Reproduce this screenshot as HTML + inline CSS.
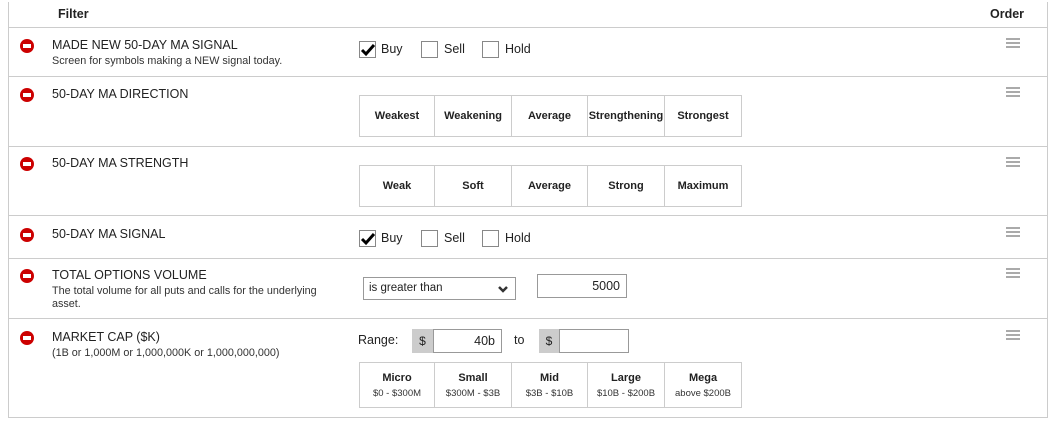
<!DOCTYPE html>
<html><head><style>
body{margin:0;background:#fff;font-family:"Liberation Sans",sans-serif;color:#222;width:1063px;height:428px;position:relative;overflow:hidden}
.box{position:absolute;left:8px;top:2px;width:1040px;height:416px;border:1px solid #ccc;border-top:none;box-sizing:border-box}
.hl{position:absolute;left:8px;width:1040px;height:1px;background:#ccc}
.t{position:absolute;font-size:12.5px;white-space:nowrap}
.s{position:absolute;font-size:10.8px;color:#333;white-space:nowrap}
.b{font-weight:bold}
.minus{position:absolute;left:20px;width:14px;height:14px;border-radius:50%;background:#c00}
.minus:after{content:"";position:absolute;left:3px;top:5px;width:8px;height:4px;background:#fff}
.ham{position:absolute;left:1006px;width:14px}
.ham i{display:block;height:2px;background:#aaa;margin-bottom:2px}
.cb{position:absolute;width:17px;height:17px;border:1px solid #888;box-sizing:border-box}
.grid{position:absolute;left:359px;display:flex;border:1px solid #ccc;box-sizing:border-box}
.grid div{border-right:1px solid #ccc;box-sizing:border-box;text-align:center;font-size:11px;font-weight:bold;display:flex;flex-direction:column;justify-content:center;white-space:nowrap}
.grid div:last-child{border-right:none}
.grid span{font-weight:normal;font-size:9.5px;margin-top:4px;color:#333}
.inp{position:absolute;border:1px solid #999;box-sizing:border-box;font-size:12.5px}
</style></head><body>
<div class="box"></div>
<div class="hl" style="top:27px"></div>
<div class="hl" style="top:76px"></div>
<div class="hl" style="top:146px"></div>
<div class="hl" style="top:215px"></div>
<div class="hl" style="top:258px"></div>
<div class="hl" style="top:318px"></div>
<div class="t b" style="left:58px;top:7px">Filter</div>
<div class="t b" style="left:990px;top:7px">Order</div>

<div class="minus" style="top:39px"></div>
<div class="t" style="left:52px;top:38px">MADE NEW 50-DAY MA SIGNAL</div>
<div class="s" style="left:52px;top:55px">Screen for symbols making a NEW signal today.</div>
<div class="ham" style="top:38px"><i></i><i></i><i></i></div>
<div class="cb" style="left:359px;top:41px"><svg width="15" height="15" viewBox="0 0 15 15" style="position:absolute;left:0;top:0"><path d="M2 8 L6 12 L14 3" stroke="#000" stroke-width="3" fill="none"/></svg></div>
<div class="t" style="left:381px;top:42px">Buy</div>
<div class="cb" style="left:421px;top:41px"></div>
<div class="t" style="left:444px;top:42px">Sell</div>
<div class="cb" style="left:482px;top:41px"></div>
<div class="t" style="left:505px;top:42px">Hold</div>

<div class="minus" style="top:88px"></div>
<div class="t" style="left:52px;top:87px">50-DAY MA DIRECTION</div>
<div class="ham" style="top:87px"><i></i><i></i><i></i></div>
<div class="grid" style="top:95px;height:42px"><div style="width:75px">Weakest</div><div style="width:77px">Weakening</div><div style="width:76px">Average</div><div style="width:77px">Strengthening</div><div style="width:76px">Strongest</div></div>

<div class="minus" style="top:157px"></div>
<div class="t" style="left:52px;top:156px">50-DAY MA STRENGTH</div>
<div class="ham" style="top:157px"><i></i><i></i><i></i></div>
<div class="grid" style="top:165px;height:42px"><div style="width:75px">Weak</div><div style="width:77px">Soft</div><div style="width:76px">Average</div><div style="width:77px">Strong</div><div style="width:76px">Maximum</div></div>

<div class="minus" style="top:228px"></div>
<div class="t" style="left:52px;top:227px">50-DAY MA SIGNAL</div>
<div class="ham" style="top:227px"><i></i><i></i><i></i></div>
<div class="cb" style="left:359px;top:230px"><svg width="15" height="15" viewBox="0 0 15 15" style="position:absolute;left:0;top:0"><path d="M2 8 L6 12 L14 3" stroke="#000" stroke-width="3" fill="none"/></svg></div>
<div class="t" style="left:381px;top:231px">Buy</div>
<div class="cb" style="left:421px;top:230px"></div>
<div class="t" style="left:444px;top:231px">Sell</div>
<div class="cb" style="left:482px;top:230px"></div>
<div class="t" style="left:505px;top:231px">Hold</div>

<div class="minus" style="top:269px"></div>
<div class="t" style="left:52px;top:268px">TOTAL OPTIONS VOLUME</div>
<div class="s" style="left:52px;top:285px">The total volume for all puts and calls for the underlying</div>
<div class="s" style="left:52px;top:298px">asset.</div>
<div class="ham" style="top:268px"><i></i><i></i><i></i></div>
<div class="inp" style="left:363px;top:277px;width:153px;height:23px;padding:4px 0 0 5px;font-size:11.5px">is greater than<svg style="position:absolute;right:7px;top:7px" width="10" height="8" viewBox="0 0 10 8"><path d="M1 2 L5 6 L9 2" stroke="#333" stroke-width="2.5" fill="none"/></svg></div>
<div class="inp" style="left:537px;top:274px;width:90px;height:24px;text-align:right;padding:4px 6px 0 0">5000</div>

<div class="minus" style="top:331px"></div>
<div class="t" style="left:52px;top:330px">MARKET CAP ($K)</div>
<div class="s" style="left:52px;top:347px">(1B or 1,000M or 1,000,000K or 1,000,000,000)</div>
<div class="ham" style="top:330px"><i></i><i></i><i></i></div>
<div class="t" style="left:358px;top:333px">Range:</div>
<div style="position:absolute;left:412px;top:329px;width:21px;height:24px;background:#ccc;font-size:12px;text-align:center;line-height:24px">$</div>
<div class="inp" style="left:433px;top:329px;width:69px;height:24px;text-align:right;padding:4px 6px 0 0">40b</div>
<div class="t" style="left:514px;top:333px">to</div>
<div style="position:absolute;left:539px;top:329px;width:20px;height:24px;background:#ccc;font-size:12px;text-align:center;line-height:24px">$</div>
<div class="inp" style="left:559px;top:329px;width:70px;height:24px"></div>
<div class="grid" style="top:362px;height:46px"><div style="width:75px">Micro<span>$0 - $300M</span></div><div style="width:77px">Small<span>$300M - $3B</span></div><div style="width:76px">Mid<span>$3B - $10B</span></div><div style="width:77px">Large<span>$10B - $200B</span></div><div style="width:76px">Mega<span>above $200B</span></div></div>
</body></html>
